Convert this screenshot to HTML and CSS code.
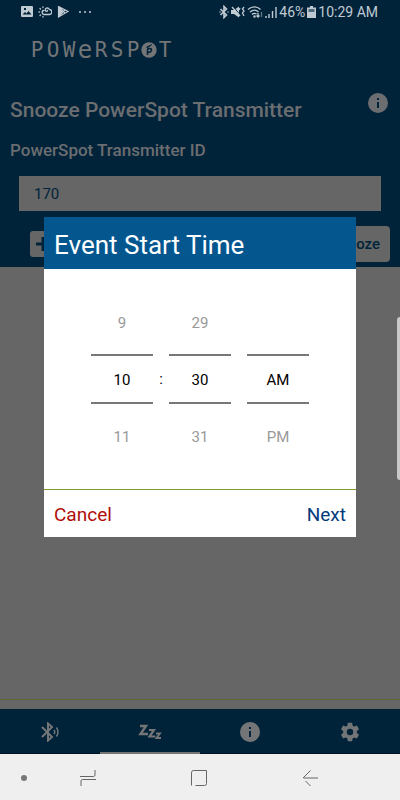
FILE: index.html
```html
<!DOCTYPE html>
<html lang="en">
<head>
<meta charset="utf-8">
<meta name="viewport" content="width=device-width, initial-scale=1">
<title>Snooze PowerSpot Transmitter</title>
<link rel="stylesheet" href="styles.css">
</head>
<body>
<div class="app">
  <header class="top">
    <div class="status">
      <div class="status-left">
        <svg width="12" height="12" viewBox="0 0 12 12"><path fill="currentColor" fill-rule="evenodd" d="M1 0h10a1 1 0 0 1 1 1v9a1 1 0 0 1-1 1H1a1 1 0 0 1-1-1V1a1 1 0 0 1 1-1zM1.500 8.500h9L7.500 5 5.500 7.500 4 6zM3 2v2h2V2z"/></svg>
        <svg width="14" height="12" viewBox="0 0 14 12" fill="none" stroke="currentColor" stroke-width="1.300" stroke-linecap="round"><path d="M6 8.500h5a2.500 2.500 0 0 0 .5-5C10 1 6.500 2 7.500 4.500c.5 1.500 2 1 2 0M6 8.500C3.500 8 3.500 4.500 6 4.500"/><path d="M1 6h.5M2 2.500l.5.500M5 1v.500M2 9.500l.5-.5M5 11v-.5" /></svg>
        <svg width="12" height="12" viewBox="0 0 12 12"><path fill="currentColor" d="M1 0v11L6 5.500z"/><path fill="none" stroke="currentColor" stroke-width="1.200" d="M1.500.5l9.500 5-9.500 5.500zM2 1l6 6M2 10l6-6"/></svg>
        <svg class="dots" width="14" height="12" viewBox="0 0 14 12" fill="currentColor"><circle cx="2" cy="6" r="1"/><circle cx="7" cy="6" r="1"/><circle cx="12" cy="6" r="1"/></svg>
      </div>
      <div class="status-right">
        <svg width="10" height="14" viewBox="0 0 10 14" fill="none" stroke="currentColor" stroke-width="1.600"><path d="M1.500 4l6 6L5 12.500v-11L7.500 4l-6 6"/><path d="M.5 7h1M8.500 7h1"/></svg>
        <svg width="14" height="14" viewBox="0 0 14 14"><path fill="currentColor" d="M0 5h3l5-3.500v11L3 9H0z"/><path stroke="#00233a" stroke-width="1" d="M2 1l8 10"/><path fill="none" stroke="currentColor" stroke-width="1.300" d="M1 2l8 9M9 3L8 5M13 2l-1.500 2 1.500 2-1.500 2 1.500 3"/></svg>
        <svg width="16" height="14" viewBox="0 0 16 14" fill="none" stroke="currentColor" stroke-width="1.300"><path d="M1 4.500c4-3.500 9-3.500 12.500 0M3 7c3-2.500 6-2.500 8.500 0M5 9.500c1.500-1.500 3-1.500 4.500-.5"/><circle cx="7.500" cy="11.500" r=".6"/><path d="M11 8v4M9.500 10.500L11 12l1.500-1.500"/><path opacity=".5" d="M14.500 12V7"/></svg>
        <svg width="12" height="14" viewBox="0 0 12 14" stroke="currentColor" stroke-width="1.400"><path d="M1 13v-2M4 13V9M7.500 13V6M11 13V2"/></svg>
        <span class="battery-text">46%</span>
        <svg width="9" height="14" viewBox="0 0 9 14"><path fill="currentColor" d="M3 1h3v1.500h3V13H0V2.500h3z"/><path fill="#526b7c" d="M1.500 4h6v3h-6z"/></svg>
        <span>10:29 AM</span>
      </div>
    </div>
    <div class="logo">
      <span>P</span><span>O</span><span>W</span><span class="logo-e">e</span><span>R</span><span>S</span><span>P</span>
      <svg width="16" height="16" viewBox="0 0 16 16"><circle cx="8" cy="8" r="7.700" fill="currentColor"/><path d="M6.500 13V8c0-2 4-2 4 0s-2 2.500-4 2M6 6c.5-2 2-1 3-2.500" fill="none" stroke="#00233a" stroke-width="1.500"/><path d="M9 3.500l2-1" stroke="#00233a"/></svg>
      <span>T</span>
    </div>
    <div class="heading">
      <h1>Snooze PowerSpot Transmitter</h1>
      <button class="info" aria-label="Information"><svg width="20" height="20" viewBox="0 0 20 20"><circle cx="10" cy="10" r="10" fill="currentColor"/><path d="M9 5h2v2H9zM9 9h2v6H9z" fill="#00233a"/></svg></button>
    </div>
    <label class="field-label" for="transmitter">PowerSpot Transmitter ID</label>
    <input class="field" id="transmitter" type="text" value="170">
    <div class="actions">
      <button class="add" aria-label="Add"><svg width="14" height="14" viewBox="0 0 14 14"><path d="M7 0v14M0 7h14" stroke="#00233a" stroke-width="3"/></svg></button>
      <button class="snooze">Snooze</button>
    </div>
  </header>
  <main class="content"></main>
  <nav class="tabs">
    <a class="tab" href="#bluetooth" aria-label="Bluetooth"><svg width="20" height="20" viewBox="0 0 20 20" fill="none" stroke="currentColor" stroke-width="2"><path d="M2 5l10 10-4 3.500v-17L12 5 2 15"/><path stroke-width="1.500" d="M14 8q1.500 2 0 4M16.500 5.500q3 4.500 0 9"/></svg></a>
    <a class="tab tab-active" href="#snooze" aria-label="Snooze"><svg width="24" height="20" viewBox="0 0 24 20" fill="none" stroke="currentColor"><path stroke-width="2.400" d="M2 4h6L2.500 12H10"/><path stroke-width="2.200" d="M11 8h5l-4.500 6.500H17.500"/><path stroke-width="1.800" d="M18 11.500h4l-3.500 4.500H23"/></svg></a>
    <a class="tab" href="#info" aria-label="Information"><svg width="20" height="20" viewBox="0 0 20 20"><circle cx="10" cy="10" r="10" fill="currentColor"/><path d="M9 5h2v2H9zM9 9h2v6H9z" fill="#00233a"/></svg></a>
    <a class="tab" href="#settings" aria-label="Settings"><svg width="22" height="22" viewBox="0 0 24 24"><path fill="currentColor" d="M19.430 12.980c.04-.32.070-.64.070-.98s-.03-.66-.07-.98l2.110-1.650c.19-.15.240-.42.120-.64l-2-3.460c-.12-.22-.39-.3-.61-.22l-2.490 1c-.52-.4-1.080-.73-1.690-.98l-.38-2.650C14.460 2.180 14.250 2 14 2h-4c-.25 0-.46.180-.49.420l-.38 2.650c-.61.250-1.170.590-1.690.980l-2.490-1c-.23-.09-.49 0-.61.220l-2 3.460c-.13.220-.07.490.12.640l2.110 1.650c-.04.320-.07.650-.07.980s.03.660.07.980l-2.110 1.650c-.19.150-.24.420-.12.640l2 3.460c.12.220.39.300.61.220l2.490-1c.52.400 1.080.730 1.690.980l.38 2.650c.03.240.24.420.49.420h4c.25 0 .46-.18.490-.42l.38-2.650c.61-.25 1.170-.59 1.690-.98l2.490 1c.23.090.49 0 .61-.22l2-3.460c.12-.22.070-.49-.12-.64zM12 15.500a3.500 3.500 0 1 1 0-7 3.500 3.500 0 0 1 0 7z"/></svg></a>
  </nav>
  <div class="edge-handle"></div>
  <section class="dialog" role="dialog" aria-labelledby="dialog-title">
    <h2 class="dialog-title" id="dialog-title">Event Start Time</h2>
    <div class="picker">
      <div class="wheel"><span>9</span><strong>10</strong><span>11</span></div>
      <div class="colon">:</div>
      <div class="wheel"><span>29</span><strong>30</strong><span>31</span></div>
      <div class="colon"></div>
      <div class="wheel"><span></span><strong>AM</strong><span>PM</span></div>
    </div>
    <div class="dialog-actions">
      <button class="cancel">Cancel</button>
      <button class="next">Next</button>
    </div>
  </section>
</div>
<footer class="system">
  <svg width="6" height="16" viewBox="0 0 6 16"><circle cx="3" cy="8" r="3" fill="#777"/></svg>
  <div class="system-buttons">
    <button aria-label="Recent apps"><svg width="16" height="18" viewBox="0 0 16 18"><path d="M0 7.500h13.500q1.500 0 1.500-1.500V1M16 10.500H2.500Q1 10.500 1 12v5"/></svg></button>
    <button aria-label="Home"><svg width="16" height="18" viewBox="0 0 16 18"><path d="M.5 16.500V3.500q0-2 2-2h13v13q0 2-2 2h-9"/></svg></button>
    <button aria-label="Back"><svg width="16" height="18" viewBox="0 0 16 18"><path d="M16 9H1.500M8.500 1.500L1 9M3.500 12l5 5"/></svg></button>
  </div>
</footer>
</body>
</html>
```
FILE: styles.css
```css
* { box-sizing: border-box; }

body {
  margin: 0;
  min-height: 100vh;
  display: flex;
  flex-direction: column;
  font-family: Roboto, "Liberation Sans", sans-serif;
  background: #666;
}

h1, h2 { margin: 0; }
svg { display: block; flex: none; }

button {
  border: 0;
  padding: 0;
  background: none;
  color: inherit;
  font-family: inherit;
}

.app {
  position: relative;
  flex: 1;
  display: flex;
  flex-direction: column;
}

.top {
  background: #00233a;
  color: #6b6d70;
  display: flex;
  flex-direction: column;
  padding-bottom: 5px;
}

.status {
  height: 24px;
  padding: 0 22px 0 21px;
  display: flex;
  justify-content: space-between;
  align-items: center;
  color: #c0cad2;
  font-size: 14px;
}

.status-left, .status-right {
  display: flex;
  align-items: center;
  gap: 5px;
}

.status-right { gap: 2px; }
.dots { margin-left: 4px; }

.logo {
  height: 20px;
  margin: 16px 0 0 29px;
  display: grid;
  grid-template-columns: repeat(9, 16px);
  align-items: center;
  justify-items: center;
  color: #737577;
  font-family: "DejaVu Sans Mono", monospace;
  font-size: 21px;
  line-height: 20px;
}

.logo-e { font-size: 24px; }

.heading {
  display: flex;
  justify-content: space-between;
  margin: 33px 12px 0 10px;
}

.heading h1 {
  font-size: 21px;
  line-height: 34px;
  font-weight: 500;
}

.info { align-self: flex-start; }

.field-label {
  margin: 12px 10px 0;
  font-size: 17px;
  line-height: 22px;
  font-weight: 500;
}

.field {
  margin: 15px 19px 0;
  height: 35px;
  border: 0;
  border-radius: 0;
  padding: 0 15px;
  background: #666;
  color: #00233a;
  font-family: inherit;
  font-size: 15px;
}

.actions {
  margin: 15px 10px 0 30px;
  display: flex;
  justify-content: space-between;
  align-items: center;
}

.add {
  width: 26px;
  height: 26px;
  border-radius: 3px;
  background: #666;
  display: flex;
  align-items: center;
  justify-content: center;
}

.snooze {
  height: 36px;
  padding: 0 10px;
  border-radius: 4px;
  background: #666;
  color: #00233a;
  font-size: 15px;
  font-weight: 500;
}

.content {
  flex: 1;
  margin-bottom: 9px;
  border-bottom: 1px solid #596530;
}

.tabs {
  display: grid;
  grid-template-columns: repeat(4, 1fr);
  height: 45px;
  background: #00233a;
  color: #737577;
}

.tab {
  display: flex;
  align-items: center;
  justify-content: center;
  color: inherit;
  padding-top: 2px;
  border-bottom: 1px solid #001222;
}

.tab-active { border-bottom: 2px solid #737577; }

.edge-handle {
  position: absolute;
  right: 0;
  top: 42%;
  width: 3px;
  height: 163px;
  border-radius: 3px 0 0 3px;
  background: #c8c8c8;
}

.dialog {
  position: absolute;
  top: 50%;
  left: 50%;
  width: 78%;
  transform: translate(-50%, -50%);
  background: #fff;
}

.dialog-title {
  height: 52px;
  padding: 0 10px;
  background: #04568f;
  color: #fff;
  font-size: 26px;
  line-height: 56px;
  font-weight: 400;
}

.picker {
  display: flex;
  justify-content: center;
  padding: 25px 0;
  color: #000;
  font-size: 15px;
}

.wheel {
  width: 62px;
  text-align: center;
}

.wheel span {
  display: block;
  height: 60px;
  line-height: 58px;
  color: #999;
}

.wheel span:last-child { line-height: 66px; }

.wheel strong {
  display: block;
  height: 50px;
  line-height: 48px;
  border-top: 2px solid #777;
  border-bottom: 2px solid #777;
  font-weight: 400;
}

.colon {
  width: 16px;
  line-height: 170px;
  text-align: center;
}

.dialog-actions {
  display: flex;
  justify-content: space-between;
  height: 48px;
  padding: 0 10px;
  border-top: 1px solid #7f9a2c;
}

.dialog-actions button {
  font-size: 19px;
  line-height: 50px;
}

.cancel { color: #b00d08; }
.next { color: #023a7c; }

.system {
  display: flex;
  align-items: center;
  height: 46px;
  padding: 2px 34px 0 21px;
  background: #efefef;
}

.system-buttons {
  flex: 1;
  display: grid;
  grid-template-columns: repeat(3, 1fr);
  justify-items: center;
  margin-left: 5px;
}

.system path {
  fill: none;
  stroke: #666;
  stroke-width: 1;
}
```
